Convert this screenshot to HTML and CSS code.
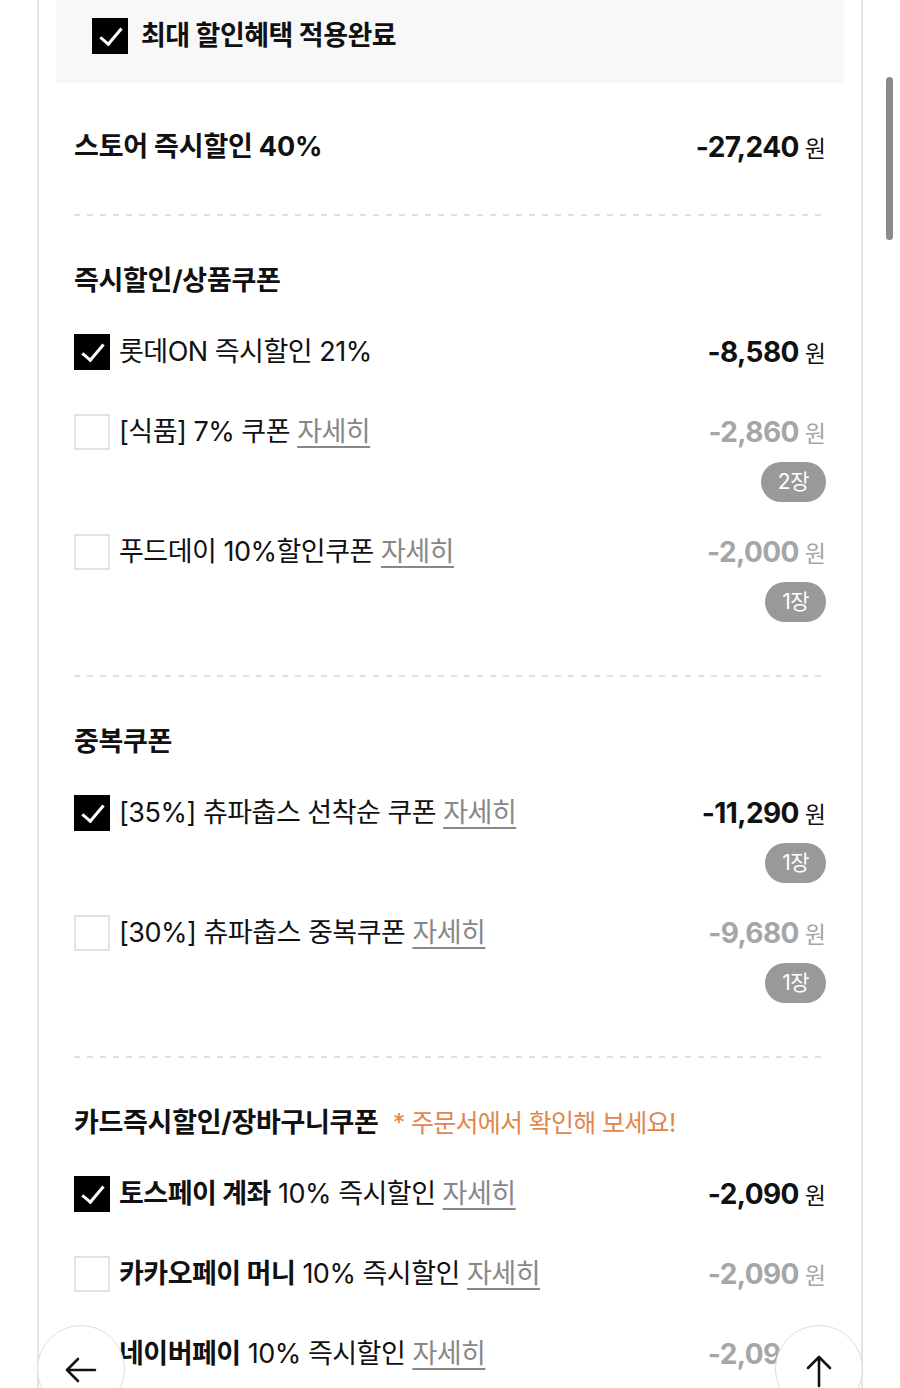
FILE: index.html
```html
<!DOCTYPE html>
<html lang="ko">
<head>
    <meta charset="UTF-8">
    <meta name="viewport" content="width=device-width, initial-scale=1.0">
    <title>할인혜택</title>
    <link rel="stylesheet" href="styles.css">
</head>
<body>

    <div class="sheet">

        <!-- 최대 할인 -->
        <div class="max-box">
            <span class="check on"></span>
            <span class="max-title">최대 할인혜택 적용완료</span>
        </div>

        <div class="store-row">
            <span class="store-title">스토어 즉시할인 40%</span>
            <span class="amount"><b>-27,240</b>원</span>
        </div>

        <div class="divider"></div>

        <!-- 즉시할인/상품쿠폰 -->
        <div class="section">
            <h3 class="sec-title">즉시할인/상품쿠폰</h3>

            <div class="row">
                <span class="check on"></span>
                <span class="label">롯데ON 즉시할인 21%</span>
                <div class="right">
                    <span class="amount"><b>-8,580</b>원</span>
                </div>
            </div>

            <div class="row has-badge">
                <span class="check"></span>
                <span class="label">[식품] 7% 쿠폰 <a class="more">자세히</a></span>
                <div class="right">
                    <span class="amount off"><b>-2,860</b>원</span>
                    <span class="badge">2장</span>
                </div>
            </div>

            <div class="row has-badge">
                <span class="check"></span>
                <span class="label">푸드데이 10%할인쿠폰 <a class="more">자세히</a></span>
                <div class="right">
                    <span class="amount off"><b>-2,000</b>원</span>
                    <span class="badge">1장</span>
                </div>
            </div>
        </div>

        <div class="divider"></div>

        <!-- 중복쿠폰 -->
        <div class="section">
            <h3 class="sec-title">중복쿠폰</h3>

            <div class="row has-badge">
                <span class="check on"></span>
                <span class="label">[35%] 츄파춥스 선착순 쿠폰 <a class="more">자세히</a></span>
                <div class="right">
                    <span class="amount"><b>-11,290</b>원</span>
                    <span class="badge">1장</span>
                </div>
            </div>

            <div class="row has-badge">
                <span class="check"></span>
                <span class="label">[30%] 츄파춥스 중복쿠폰 <a class="more">자세히</a></span>
                <div class="right">
                    <span class="amount off"><b>-9,680</b>원</span>
                    <span class="badge">1장</span>
                </div>
            </div>
        </div>

        <div class="divider"></div>

        <!-- 카드즉시할인/장바구니쿠폰 -->
        <div class="section">
            <h3 class="sec-title">카드즉시할인/장바구니쿠폰 <span class="note">* 주문서에서 확인해 보세요!</span></h3>

            <div class="row">
                <span class="check on"></span>
                <span class="label"><b>토스페이 계좌</b> 10% 즉시할인 <a class="more">자세히</a></span>
                <div class="right">
                    <span class="amount"><b>-2,090</b>원</span>
                </div>
            </div>

            <div class="row">
                <span class="check"></span>
                <span class="label"><b>카카오페이 머니</b> 10% 즉시할인 <a class="more">자세히</a></span>
                <div class="right">
                    <span class="amount off"><b>-2,090</b>원</span>
                </div>
            </div>

            <div class="row">
                <span class="check"></span>
                <span class="label"><b>네이버페이</b> 10% 즉시할인 <a class="more">자세히</a></span>
                <div class="right">
                    <span class="amount off"><b>-2,090</b>원</span>
                </div>
            </div>
        </div>

    </div>

    <!-- floating buttons -->
    <button class="fab back" aria-label="뒤로">
        <svg width="36" height="36" viewBox="0 0 36 36" fill="none" stroke="#111" stroke-width="2.6" stroke-linecap="round" stroke-linejoin="round">
            <path d="M32 18H4M15 7L4 18l11 11"/>
        </svg>
    </button>
    <button class="fab top" aria-label="맨 위로">
        <svg width="36" height="36" viewBox="0 0 36 36" fill="none" stroke="#111" stroke-width="2.6" stroke-linecap="round" stroke-linejoin="round">
            <path d="M18 34V5M7 16L18 5l11 11"/>
        </svg>
    </button>

    <div class="scrollbar"></div>

</body>
</html>
```

FILE: styles.css
```css
html, body {
    margin: 0;
    height: 1388px;
    overflow: hidden;
    background: #fff;
}
body {
    font-family: "Inter", "Noto Sans CJK KR", sans-serif;
    color: #111;
    position: relative;
}
.sheet {
    margin: 0 37px 0 37px;
    border-left: 2px solid #e4e4e4;
    border-right: 2px solid #e4e4e4;
    padding: 0 17px 0 17px;
    height: 1388px;
    box-sizing: border-box;
}

/* checkbox */
.check {
    flex: none;
    width: 36px;
    height: 36px;
    box-sizing: border-box;
    border: 2px solid #e2e2e2;
    background: #fff;
    display: inline-block;
    position: relative;
}
.check.on {
    background: #000;
    border-color: #000;
}
.check.on::after {
    content: "";
    position: absolute;
    left: 11px;
    top: 3px;
    width: 9px;
    height: 19px;
    border-right: 3px solid #fff;
    border-bottom: 3px solid #fff;
    transform: rotate(40deg);
}

.max-box {
    background: #f8f8f8;
    height: 83px;
    display: flex;
    align-items: flex-start;
    padding: 18px 0 0 36px;
    box-sizing: border-box;
}
.max-title {
    margin-left: 13px;
    font-size: 27px;
    font-weight: 700;
    letter-spacing: -0.5px;
    line-height: 36px;
    height: 36px;
}

.store-row {
    display: flex;
    justify-content: space-between;
    align-items: center;
    height: 40px;
    padding: 44px 18px 0 18px;
    margin-bottom: 47px;
}
.store-title {
    font-size: 27px;
    font-weight: 700;
    letter-spacing: -0.2px;
    line-height: 40px;
    height: 40px;
}

.divider {
    margin: 0 18px;
    height: 2px;
    background: repeating-linear-gradient(90deg, #e0e0e0 0 6px, transparent 6px 13px);
}

.section {
    padding: 45px 18px 23px 18px;
}
.sec-title {
    margin: 0 0 31px 0;
    font-size: 27px;
    font-weight: 700;
    letter-spacing: -0.3px;
    line-height: 40px;
    height: 40px;
    white-space: nowrap;
}
.note {
    margin-left: 8px;
    font-size: 25px;
    font-weight: 400;
    color: #e0874e;
    letter-spacing: -0.7px;
}

.row {
    display: flex;
    align-items: flex-start;
    margin-bottom: 40px;
}
.row.has-badge {
    margin-bottom: 30px;
}
.row .check {
    margin-top: 2px;
}
.label {
    margin-left: 9px;
    flex: 1;
    font-size: 27px;
    line-height: 40px;
    height: 40px;
    letter-spacing: -0.5px;
    white-space: nowrap;
}
.label b {
    font-weight: 700;
}
.more {
    color: #888;
    text-decoration: underline;
    text-underline-offset: 5px;
    text-decoration-thickness: 1.5px;
}
.right {
    display: flex;
    flex-direction: column;
    align-items: flex-end;
}
.amount {
    display: block;
    font-size: 23px;
    line-height: 40px;
    height: 40px;
    white-space: nowrap;
}
.amount b {
    margin-right: 6px;
    font-size: 28px;
    font-weight: 700;
    letter-spacing: -0.6px;
}
.amount.off {
    color: #a6a6a6;
}
.badge {
    margin-top: 10px;
    height: 40px;
    line-height: 40px;
    padding: 0 17px;
    border-radius: 20px;
    background: #999;
    color: #fff;
    font-size: 21px;
    letter-spacing: -0.5px;
}

.fab {
    position: absolute;
    top: 1325px;
    width: 88px;
    height: 88px;
    border-radius: 50%;
    border: 1.5px solid #ddd;
    background: #fff;
    padding: 0;
    display: flex;
    align-items: flex-start;
    justify-content: center;
    padding-top: 26px;
    box-sizing: border-box;
}
.fab.back {
    left: 37px;
}
.fab.top {
    left: 775px;
}

.scrollbar {
    position: absolute;
    left: 886px;
    top: 77px;
    width: 7px;
    height: 163px;
    border-radius: 4px;
    background: #8a8a8a;
}
```
